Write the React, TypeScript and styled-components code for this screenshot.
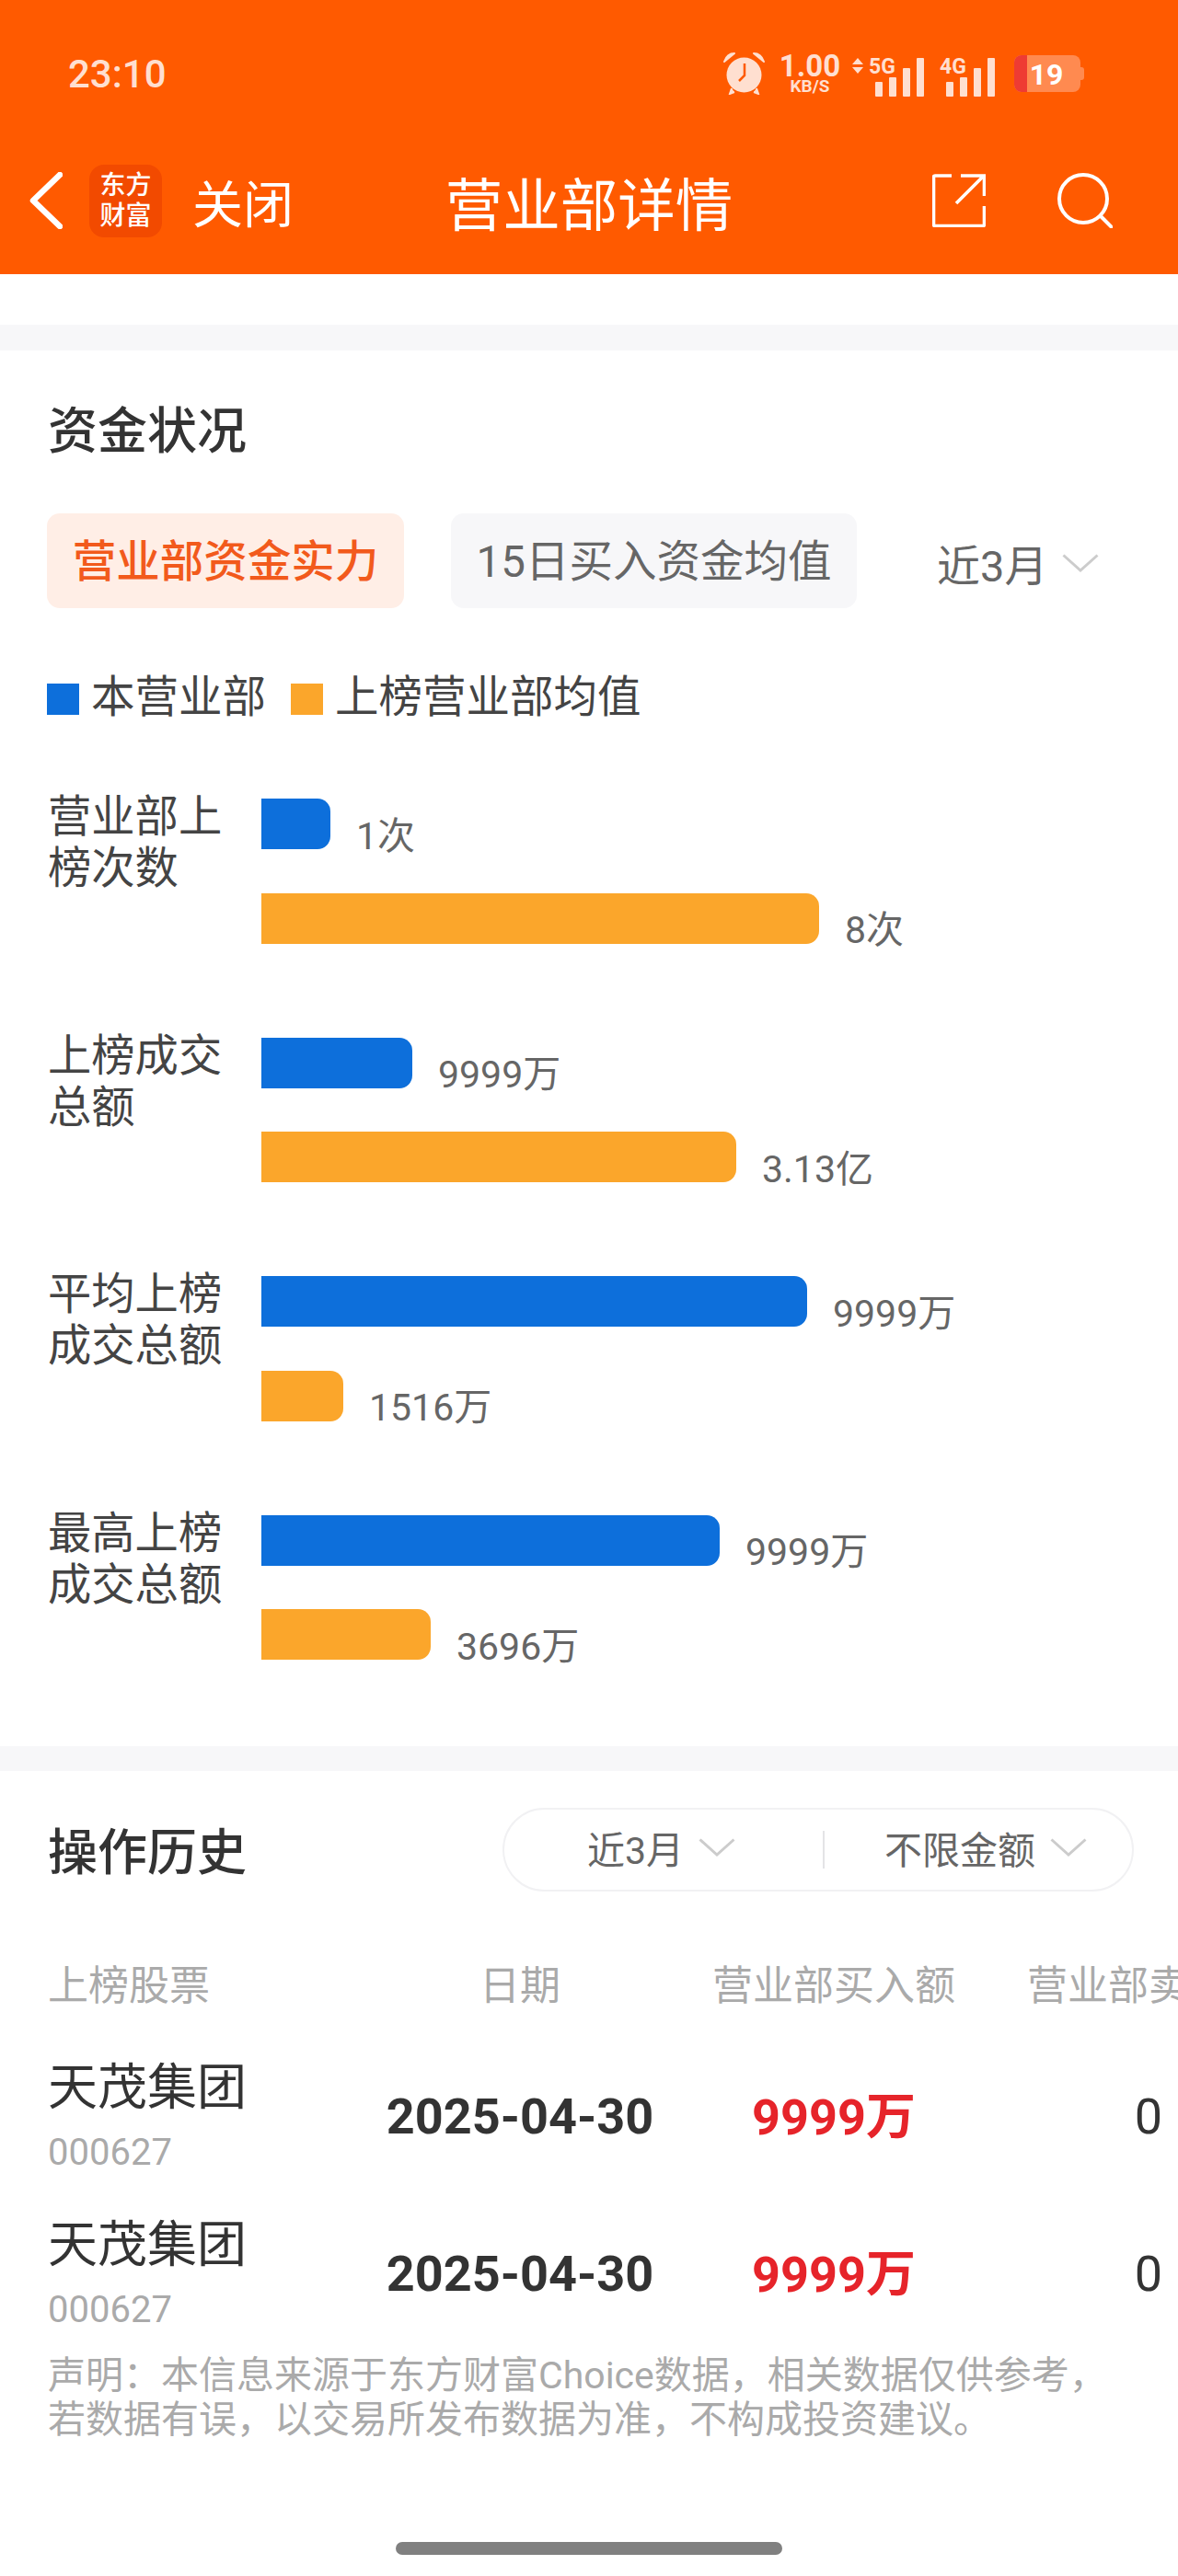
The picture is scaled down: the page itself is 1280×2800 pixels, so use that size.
import React from "react";
import styled, { createGlobalStyle } from "styled-components";

const GlobalStyle = createGlobalStyle`
  html, body {
    margin: 0;
    padding: 0;
    background: #fff;
  }
  body {
    font-family: Roboto, "Noto Sans CJK SC", sans-serif;
    color: #333;
  }
`;

const Page = styled.div`
  width: 1280px;
  height: 2800px;
  overflow: hidden;
  background: #fff;
`;

const Header = styled.header`
  height: 298px;
  background: #ff5a00;
`;

const StatusBar = styled.div`
  height: 160px;
  display: flex;
  align-items: center;
  justify-content: space-between;
  padding: 0 102px 0 74px;
  color: #ffdfd0;
`;

const Time = styled.span`
  font-size: 42px;
  font-weight: 500;
`;

const StatusIcons = styled.div`
  display: flex;
  align-items: center;
`;

const Speed = styled.div`
  width: 66px;
  margin: 0 13px 0 16px;
  display: flex;
  flex-direction: column;
  align-items: center;
  font-weight: 700;
`;

const SpeedValue = styled.span`
  font-size: 33px;
  line-height: 27px;
`;

const SpeedUnit = styled.span`
  font-size: 19px;
  line-height: 17px;
`;

const StatusGap = styled.span<{ $width: number }>`
  width: ${(p) => p.$width}px;
`;

const Nav = styled.nav`
  height: 116px;
  display: grid;
  grid-template-columns: 400px 480px 400px;
  align-items: center;
`;

const NavLeft = styled.div`
  display: flex;
  align-items: center;
  padding-left: 32px;
`;

const Logo = styled.div`
  width: 79px;
  height: 79px;
  margin: 0 33px 0 29px;
  border-radius: 16px;
  background: #f24a00;
  color: #fff;
  display: flex;
  align-items: center;
  justify-content: center;
  text-align: center;
  font-size: 28px;
  font-weight: 500;
  line-height: 33px;
`;

const CloseText = styled.span`
  font-size: 55px;
  color: #fff;
`;

const NavTitle = styled.h1`
  margin: 0;
  text-align: center;
  font-size: 62.5px;
  font-weight: 400;
  color: #fff;
`;

const NavRight = styled.div`
  display: flex;
  align-items: center;
  justify-content: flex-end;
  gap: 78px;
  padding-right: 71px;
`;

const Spacer = styled.div`
  height: 55px;
`;

const Band = styled.div<{ $height: number }>`
  height: ${(p) => p.$height}px;
  background: #f7f7f9;
`;

const FundSection = styled.section`
  padding: 62px 0 94px 52px;
`;

const SectionTitle = styled.h2`
  margin: 0;
  font-size: 54px;
  line-height: 54px;
  font-weight: 500;
  color: #333;
  white-space: nowrap;
`;

const HistoryTitle = styled(SectionTitle)`
  padding-top: 8px;
`;

const TabRow = styled.div`
  margin: 61px 0 0 -1px;
  display: flex;
  align-items: flex-start;
`;

const Tab = styled.div<{ $active?: boolean }>`
  width: ${(p) => (p.$active ? 388 : 441)}px;
  height: 103px;
  box-sizing: border-box;
  padding-bottom: 6px;
  margin-right: 51px;
  border-radius: 14px;
  display: flex;
  align-items: center;
  justify-content: center;
  font-size: 47.5px;
  background: ${(p) => (p.$active ? "#ffeee6" : "#f7f7f9")};
  color: ${(p) => (p.$active ? "#f25a1c" : "#666")};
  font-weight: ${(p) => (p.$active ? 500 : 400)};
  white-space: nowrap;
`;

const RangeSelect = styled.div`
  margin: 21px 0 0 36px;
  height: 65px;
  display: flex;
  align-items: center;
  gap: 16px;
  font-size: 47px;
  color: #666;
  white-space: nowrap;
`;

const Legend = styled.div`
  margin: 71px 0 0 -1px;
  height: 56px;
  display: flex;
  align-items: center;
`;

const LegendSwatch = styled.span<{ $color: string }>`
  width: 35px;
  height: 34px;
  margin-right: 13px;
  background: ${(p) => p.$color};
`;

const LegendText = styled.span`
  margin-right: 27px;
  padding-bottom: 14px;
  font-size: 47.5px;
  color: #444;
  white-space: nowrap;
`;

const Chart = styled.div`
  margin-top: 70px;
  display: flex;
  flex-direction: column;
  gap: 92px;
`;

const ChartRow = styled.div`
  display: grid;
  grid-template-columns: 232px 1fr;
`;

const RowLabel = styled.div`
  padding-top: 2px;
  font-size: 47.3px;
  line-height: 56px;
  color: #444;
`;

const BarGroup = styled.div`
  padding-top: 10px;
  display: flex;
  flex-direction: column;
  gap: 47.5px;
`;

const BarLine = styled.div`
  height: 55px;
  display: flex;
  align-items: center;
`;

const Bar = styled.div<{ $color: string }>`
  height: 55px;
  border-radius: 0 14px 14px 0;
  background: ${(p) => p.$color};
`;

const BarValue = styled.span`
  margin-left: 28px;
  padding-top: 26px;
  font-size: 41px;
  line-height: 40px;
  color: #666;
  white-space: nowrap;
`;

const HistorySection = styled.section`
  padding-top: 40px;
`;

const HistoryHead = styled.div`
  height: 91px;
  padding: 0 48px 0 52px;
  display: flex;
  align-items: center;
  justify-content: space-between;
`;

const FilterPill = styled.div`
  width: 686px;
  height: 91px;
  box-sizing: border-box;
  border: 2px solid #f1f1f3;
  border-radius: 46px;
  display: grid;
  grid-template-columns: 346px 2px 1fr;
  align-items: center;
`;

const FilterCell = styled.div<{ $shift: number; $trail: number }>`
  display: flex;
  align-items: center;
  justify-content: center;
  gap: 16px;
  padding: 0 ${(p) => p.$trail}px 6px ${(p) => p.$shift}px;
  font-size: 41px;
  color: #666;
  white-space: nowrap;
`;

const FilterDivider = styled.span`
  height: 41px;
  background: #e4e4e6;
`;

const TableGrid = styled.div`
  display: grid;
  grid-template-columns: 342px 342px 340px 344px;
  padding-left: 52px;
  width: 1368px;
  align-items: center;
`;

const TableHead = styled(TableGrid)`
  margin-top: 67px;
  height: 60px;
  font-size: 44px;
  color: #aaa;
  margin-bottom: 52px;
`;

const TableRow = styled(TableGrid)`
  height: 130px;
  margin-bottom: 41px;
`;

const HeadCell = styled.div<{ $left?: boolean }>`
  padding-bottom: 12px;
  text-align: ${(p) => (p.$left ? "left" : "center")};
  white-space: nowrap;
`;

const StockName = styled.div`
  margin-top: 3px;
  font-size: 54px;
  line-height: 64px;
  color: #333;
`;

const StockCode = styled.div`
  margin-top: 13px;
  font-size: 40px;
  line-height: 50px;
  color: #aaa;
`;

const DataCell = styled.div<{ $red?: boolean }>`
  padding-bottom: ${(p) => (p.$red ? 8 : 0)}px;
  text-align: center;
  font-size: 54px;
  font-weight: 700;
  white-space: nowrap;
  color: ${(p) => (p.$red ? "#e6242a" : "#333")};
`;

const PlainCell = styled(DataCell)`
  font-weight: 400;
`;

const Disclaimer = styled.p`
  margin: -19px 52px 0;
  font-size: 41px;
  line-height: 48px;
  color: #aaa;
  white-space: nowrap;
`;

const HomeBar = styled.div`
  width: 420px;
  height: 14px;
  margin: 109px auto 0;
  border-radius: 7px;
  background: #808080;
`;

const Chevron = () => (
  <svg width="40" height="20" viewBox="0 0 40 20" fill="none">
    <path d="M1.5 1.5 L20 18 L38.5 1.5" stroke="#ccc" strokeWidth="3" />
  </svg>
);

const AlarmIcon = () => (
  <svg width="45" height="46" viewBox="0 0 45 46" fill="none">
    <path d="M1 10 C3 4 7 1 12 1 Z M44 10 C42 4 38 1 33 1 Z" fill="#ffdfd0" stroke="#ffdfd0" strokeWidth="2" strokeLinejoin="round" />
    <circle cx="22.5" cy="24.5" r="19" fill="#ffdfd0" />
    <path d="M9 39 L7 45 L12 43 M36 39 L38 45 L33 43" fill="#ffdfd0" stroke="#ffdfd0" strokeWidth="2" />
    <path d="M23 12 L23 25 L17 31" stroke="#ff5a00" strokeWidth="2.5" />
  </svg>
);

const SignalBars = ({ offset }: { offset: number }) => (
  <g fill="#ffdfd0">
    <rect x={offset} y="27" width="8" height="16" rx="1" />
    <rect x={offset + 15} y="22" width="8" height="21" rx="1" />
    <rect x={offset + 30} y="12" width="8" height="31" rx="1" />
    <rect x={offset + 45} y="1" width="8" height="42" rx="1" />
  </g>
);

const Signal5G = () => (
  <svg width="78" height="52" viewBox="0 -8 78 52">
    <path d="M6 1 L12 8 L0 8 Z M6 18 L12 11 L0 11 Z" fill="#ffdfd0" />
    <text x="18" y="18" fontSize="23" fontWeight="700" fontFamily="Roboto, sans-serif" fill="#ffdfd0">5G</text>
    <SignalBars offset={25} />
  </svg>
);

const Signal4G = () => (
  <svg width="60" height="52" viewBox="0 -8 60 52">
    <text x="0" y="18" fontSize="23" fontWeight="700" fontFamily="Roboto, sans-serif" fill="#ffdfd0">4G</text>
    <SignalBars offset={7} />
  </svg>
);

const BatteryIcon = () => (
  <svg width="76" height="40" viewBox="0 0 76 40">
    <rect x="0" y="0" width="72" height="40" rx="8" fill="#ff8a50" />
    <path d="M8 0 H14 V40 H8 A8 8 0 0 1 0 32 V8 A8 8 0 0 1 8 0 Z" fill="#ee3b33" />
    <path d="M72 13 H73 A3 3 0 0 1 76 16 V24 A3 3 0 0 1 73 27 H72 Z" fill="#ff8a50" />
    <text x="35" y="32" textAnchor="middle" fontSize="32" fontWeight="700" fontFamily="Roboto, sans-serif" fill="#fff">19</text>
  </svg>
);

const BackIcon = () => (
  <svg width="36" height="62" viewBox="0 0 36 62" fill="none">
    <path d="M33 3 L4 31 L33 59" stroke="#fff" strokeWidth="6.5" strokeLinecap="round" strokeLinejoin="round" />
  </svg>
);

const ShareIcon = () => (
  <svg width="58" height="58" viewBox="0 0 58 58" fill="none" stroke="#fff" strokeWidth="3.6">
    <path d="M21 2 H3 A1.5 1.5 0 0 0 1.5 3.5 V55 A1.5 1.5 0 0 0 3 56.5 H55 A1.5 1.5 0 0 0 56.5 55 V35" />
    <path d="M26 32 L56 2 M31 2 H56.5 V24" />
  </svg>
);

const SearchIcon = () => (
  <svg width="60" height="60" viewBox="0 0 60 60" fill="none" stroke="#fff" strokeWidth="4" strokeLinecap="round">
    <circle cx="28" cy="28" r="26" />
    <path d="M47 47 L59 59" />
  </svg>
);

const BLUE = "#0d6fdb";
const AMBER = "#fba62b";

const chartRows = [
  { label: ["营业部上", "榜次数"], own: 75, ownText: "1次", avg: 606, avgText: "8次" },
  { label: ["上榜成交", "总额"], own: 164, ownText: "9999万", avg: 516, avgText: "3.13亿" },
  { label: ["平均上榜", "成交总额"], own: 593, ownText: "9999万", avg: 89, avgText: "1516万" },
  { label: ["最高上榜", "成交总额"], own: 498, ownText: "9999万", avg: 184, avgText: "3696万" },
];

const disclaimerLines = [
  "声明\uFF1A本信息来源于东方财富Choice数据\uFF0C相关数据仅供参考\uFF0C",
  "若数据有误\uFF0C以交易所发布数据为准\uFF0C不构成投资建议\u3002",
];

const App = () => {
  return (
    <Page>
      <GlobalStyle />
      <Header>
        <StatusBar>
          <Time>23:10</Time>
          <StatusIcons>
            <AlarmIcon />
            <Speed>
              <SpeedValue>1.00</SpeedValue>
              <SpeedUnit>KB/S</SpeedUnit>
            </Speed>
            <Signal5G />
            <StatusGap $width={17} />
            <Signal4G />
            <StatusGap $width={21} />
            <BatteryIcon />
          </StatusIcons>
        </StatusBar>
        <Nav>
          <NavLeft>
            <BackIcon />
            <Logo>
              <div>
                东方
                <br />
                财富
              </div>
            </Logo>
            <CloseText>关闭</CloseText>
          </NavLeft>
          <NavTitle>营业部详情</NavTitle>
          <NavRight>
            <ShareIcon />
            <SearchIcon />
          </NavRight>
        </Nav>
      </Header>
      <Spacer />
      <Band $height={28} />

      <FundSection>
        <SectionTitle>资金状况</SectionTitle>
        <TabRow>
          <Tab $active>营业部资金实力</Tab>
          <Tab>15日买入资金均值</Tab>
          <RangeSelect>
            近3月
            <Chevron />
          </RangeSelect>
        </TabRow>
        <Legend>
          <LegendSwatch $color={BLUE} />
          <LegendText>本营业部</LegendText>
          <LegendSwatch $color={AMBER} />
          <LegendText>上榜营业部均值</LegendText>
        </Legend>
        <Chart>
          {chartRows.map((row) => (
            <ChartRow key={row.label.join("")}>
              <RowLabel>
                {row.label[0]}
                <br />
                {row.label[1]}
              </RowLabel>
              <BarGroup>
                <BarLine>
                  <Bar $color={BLUE} style={{ width: row.own }} />
                  <BarValue>{row.ownText}</BarValue>
                </BarLine>
                <BarLine>
                  <Bar $color={AMBER} style={{ width: row.avg }} />
                  <BarValue>{row.avgText}</BarValue>
                </BarLine>
              </BarGroup>
            </ChartRow>
          ))}
        </Chart>
      </FundSection>

      <Band $height={27} />

      <HistorySection>
        <HistoryHead>
          <HistoryTitle>操作历史</HistoryTitle>
          <FilterPill>
            <FilterCell $shift={0} $trail={5}>
              近3月
              <Chevron />
            </FilterCell>
            <FilterDivider />
            <FilterCell $shift={18} $trail={2}>
              不限金额
              <Chevron />
            </FilterCell>
          </FilterPill>
        </HistoryHead>
        <TableHead>
          <HeadCell $left>上榜股票</HeadCell>
          <HeadCell>日期</HeadCell>
          <HeadCell>营业部买入额</HeadCell>
          <HeadCell>营业部卖出额</HeadCell>
        </TableHead>
        {[0, 1].map((i) => (
          <TableRow key={i}>
            <div>
              <StockName>天茂集团</StockName>
              <StockCode>000627</StockCode>
            </div>
            <DataCell>2025-04-30</DataCell>
            <DataCell $red>9999万</DataCell>
            <PlainCell>0</PlainCell>
          </TableRow>
        ))}
        <Disclaimer>
          {disclaimerLines[0]}
          <br />
          {disclaimerLines[1]}
        </Disclaimer>
        <HomeBar />
      </HistorySection>
    </Page>
  );
};

export default App;
